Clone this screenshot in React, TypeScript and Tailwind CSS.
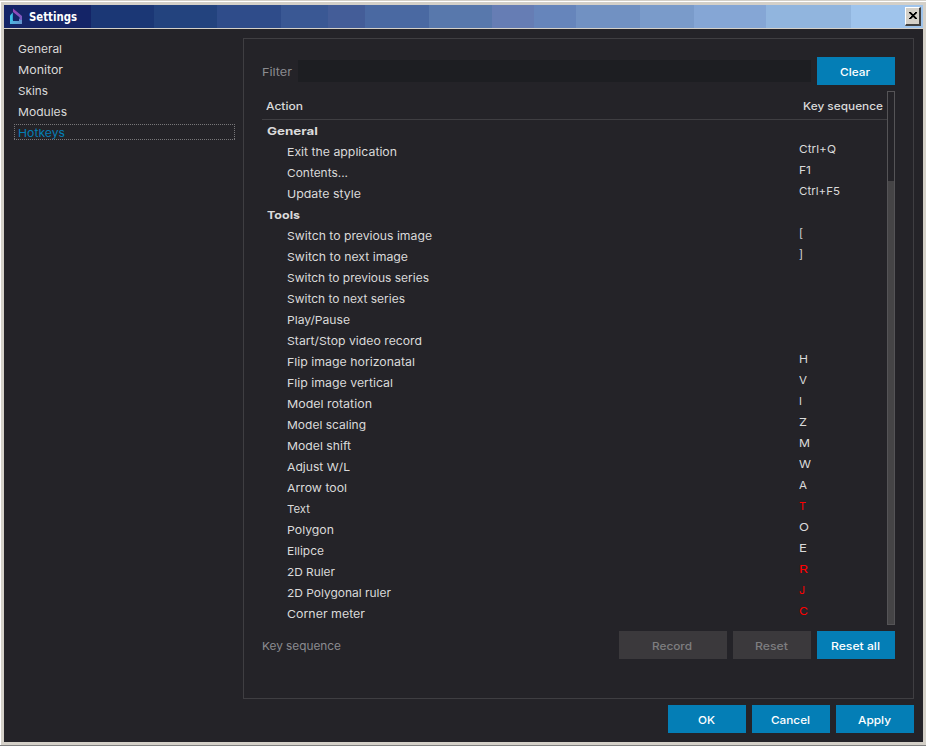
import { useLayoutEffect, useRef, useState } from "react";

type LabelProps = { w: number; children: string; className?: string };

// Text run stretched horizontally so that it spans the given width.
function Label({ w, children, className = "" }: LabelProps) {
  const ref = useRef<HTMLSpanElement>(null);
  const [scale, setScale] = useState(1);
  useLayoutEffect(() => {
    const el = ref.current;
    if (el && el.offsetWidth) {
      const range = document.createRange();
      range.selectNodeContents(el);
      const current = range.getBoundingClientRect().width;
      setScale((s) => (w * s) / current);
    }
  }, [w, children]);
  return (
    <span className={"inline-block whitespace-pre " + className} style={{ width: w }}>
      <span ref={ref} className="inline-block origin-left" style={{ transform: `scaleX(${scale})` }}>
        {children}
      </span>
    </span>
  );
}

const bands = [
  "w-[87px] bg-[#142467]", "w-[63px] bg-[#1b3775]", "w-[63px] bg-[#23437e]", "w-[64px] bg-[#2f4c8a]",
  "w-[47px] bg-[#3a5894]", "w-[37px] bg-[#445d98]", "w-[64px] bg-[#4a69a2]", "w-[63px] bg-[#5878ac]",
  "w-[42px] bg-[#667db4]", "w-[42px] bg-[#6685bb]", "w-[64px] bg-[#7191c2]", "w-[54px] bg-[#7a9bca]",
  "w-[72px] bg-[#85a6d5]", "w-[85px] bg-[#91b5de]", "w-[72px] bg-[#9fc4ec]",
];

const nav: [string, number][] = [["General", 44], ["Monitor", 45], ["Skins", 30], ["Modules", 49], ["Hotkeys", 47]];

type Row = { t: string; w: number; k?: string; kw?: number; head?: boolean; red?: boolean };
const rows: Row[] = [
  { t: "General", w: 51, head: true },
  { t: "Exit the application", w: 110, k: "Ctrl+Q", kw: 37 },
  { t: "Contents...", w: 61, k: "F1", kw: 12 },
  { t: "Update style", w: 74, k: "Ctrl+F5", kw: 41 },
  { t: "Tools", w: 33, head: true },
  { t: "Switch to previous image", w: 145, k: "[", kw: 4 },
  { t: "Switch to next image", w: 121, k: "]", kw: 4 },
  { t: "Switch to previous series", w: 142 },
  { t: "Switch to next series", w: 118 },
  { t: "Play/Pause", w: 63 },
  { t: "Start/Stop video record", w: 135 },
  { t: "Flip image horizonatal", w: 128, k: "H", kw: 9 },
  { t: "Flip image vertical", w: 106, k: "V", kw: 8 },
  { t: "Model rotation", w: 85, k: "I", kw: 3 },
  { t: "Model scaling", w: 79, k: "Z", kw: 8 },
  { t: "Model shift", w: 64, k: "M", kw: 11 },
  { t: "Adjust W/L", w: 63, k: "W", kw: 12 },
  { t: "Arrow tool", w: 60, k: "A", kw: 8 },
  { t: "Text", w: 23, k: "T", kw: 7, red: true },
  { t: "Polygon", w: 47, k: "O", kw: 10 },
  { t: "Ellipce", w: 37, k: "E", kw: 8 },
  { t: "2D Ruler", w: 48, k: "R", kw: 9, red: true },
  { t: "2D Polygonal ruler", w: 104, k: "J", kw: 6, red: true },
  { t: "Corner meter", w: 78, k: "C", kw: 9, red: true },
];

function Button({ label, w, className = "w-[78px] bg-[#047eb6] text-white" }: { label: string; w: number; className?: string }) {
  return (
    <button className={"flex h-7 items-center justify-center pr-[2px] pt-[2px] text-left font-medium " + className}>
      <Label w={w}>{label}</Label>
    </button>
  );
}

function TitleBar() {
  return (
    <header className="relative h-6 border-b border-[#d4d0c8]">
      <div className="flex h-[23px]">
        {bands.map((b) => <div key={b} className={"shrink-0 " + b} />)}
      </div>
      <svg className="absolute left-[5px] top-[3px]" width="14" height="18" viewBox="0 0 14 18" fill="none">
        <defs>
          <linearGradient id="base" x1="0" x2="1"><stop stopColor="#4bb5e2" /><stop offset="1" stopColor="#6490ca" /></linearGradient>
          <linearGradient id="roof" x1="0" x2="0" y1="0" y2="1"><stop stopColor="#a03fb4" /><stop offset="1" stopColor="#7060c4" /></linearGradient>
        </defs>
        <path d="M1 12H3.8V13H10V11H13V16H1Z" fill="url(#base)" />
        <path d="M1 7.5L3.8 4.5V13H1Z" fill="#3cc0e6" />
        <path d="M4 0.5L13 8V12H10.5V9.3L4 4Z" fill="url(#roof)" />
      </svg>
      <div className="absolute left-[25px] top-[4px] font-['DejaVu_Sans_Condensed','DejaVu_Sans','Noto_Sans',sans-serif] text-[11.5px] font-bold leading-4 text-white">
        <Label w={48}>Settings</Label>
      </div>
      <button className="absolute right-[2px] top-[2px] flex h-[19px] w-4 justify-center border-b-2 border-l border-r-2 border-t border-b-[#404040] border-l-white border-r-[#404040] border-t-white bg-[#d4d0c8] pt-1">
        <svg className="shrink-0" width="8" height="7" viewBox="0 0 8 7" shapeRendering="crispEdges">
          <path d="M0 0h2v1h-2zM6 0h2v1h-2zM1 1h2v1h-2zM5 1h2v1h-2zM2 2h4v1h-4zM3 3h2v1h-2zM2 4h4v1h-4zM1 5h2v1h-2zM5 5h2v1h-2zM0 6h2v1h-2zM6 6h2v1h-2z" fill="#000" stroke="#000" strokeWidth="0.3" />
        </svg>
      </button>
    </header>
  );
}

export default function App() {
  return (
    <div className="h-[746px] w-[926px] overflow-hidden border-b border-t border-b-[#808080] border-t-[#d4d0c8] bg-[#d4d0c8] font-['Inter','Liberation_Sans',sans-serif] text-[11px] leading-[21px] text-[#dadada]">
      <div className="flex h-[744px] flex-col border-l border-t border-white pb-[3px] pl-[3px] pr-[3px] pt-[3px]">
        <TitleBar />
        <main className="flex min-h-0 flex-1 flex-col bg-[#242328]">
          <div className="flex pl-[10px] pt-[9px]">
            <nav className="w-[229px] shrink-0">
              {nav.map(([t, w], i) => (
                <div key={t} className={"relative h-[21px] pl-1 pt-[1px] " + (i === 4 ? "text-[#047eb6]" : "")}>
                  {i === 4 && (
                    <svg className="absolute left-0 top-[2px]" width="221" height="16" shapeRendering="crispEdges">
                      <path d="M0 .5H221M0 15.5H221M.5 2V15M220.5 2V15" fill="none" stroke="#78777a" strokeDasharray="1 1" />
                    </svg>
                  )}
                  <Label w={w}>{t}</Label>
                </div>
              ))}
            </nav>
            <section className="h-[661px] w-[671px] border border-[#3f3e42] px-[18px] pt-[18px]">
              <div className="flex h-7 items-center">
                <div className="w-9 pt-[2px] text-[#8b8b90]"><Label w={30}>Filter</Label></div>
                <div className="h-[22px] w-[513px] bg-[#1d1e22]" />
                <div className="ml-[6px]"><Button label="Clear" w={30} /></div>
              </div>
              <div className="mt-[6px] flex h-[534px]">
                <div className="w-[625px]">
                  <div className="flex h-[29px] items-center justify-between border-b border-[#3f3e42] pl-1 pr-[4px] pt-[2px] font-medium">
                    <Label w={37}>Action</Label>
                    <Label w={80}>Key sequence</Label>
                  </div>
                  {rows.map((r) => (
                    <div key={r.t + r.w} className="flex h-[21px]">
                      <div className={"w-[537px] pt-[1px] " + (r.head ? "pl-[5px] font-bold" : "pl-[25px]")}>
                        <Label w={r.w}>{r.t}</Label>
                      </div>
                      {r.k && (
                        <div className={"-mt-[2px] " + (r.red ? "text-[#ff0000]" : "")}>
                          <Label w={r.kw ?? 8}>{r.k}</Label>
                        </div>
                      )}
                    </div>
                  ))}
                </div>
                <div className="w-2 border border-[#555457] bg-[#454446]">
                  <div className="h-[89px] bg-[#242328]" />
                </div>
              </div>
              <div className="mt-[6px] flex h-7 items-center">
                <div className="w-[357px] pt-[2px] text-[#8b8b90]"><Label w={79}>Key sequence</Label></div>
                <div className="flex gap-[6px]">
                  <Button label="Record" w={40} className="w-[108px] bg-[#3b393c] text-[#7e7e80]" />
                  <Button label="Reset" w={33} className="w-[78px] bg-[#3b393c] text-[#7e7e80]" />
                  <Button label="Reset all" w={49} />
                </div>
              </div>
            </section>
          </div>
          <footer className="mt-[6px] flex justify-end gap-[6px] pr-[9px]">
            <Button label="OK" w={17} />
            <Button label="Cancel" w={39} />
            <Button label="Apply" w={33} />
          </footer>
        </main>
      </div>
    </div>
  );
}
